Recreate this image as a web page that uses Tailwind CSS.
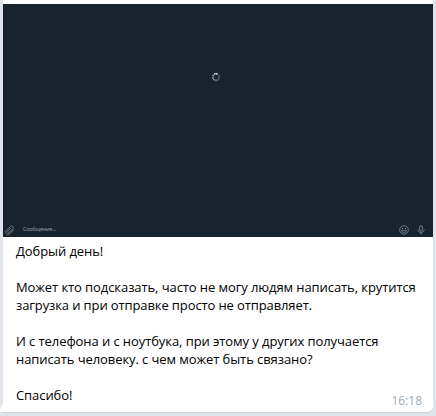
<!DOCTYPE html>
<html lang="ru">
<head>
<meta charset="utf-8">
<title>Сообщение</title>
<script src="https://cdn.jsdelivr.net/npm/@tailwindcss/browser@4"></script>
</head>
<body class="w-[436px] h-[416px] overflow-hidden bg-[#dfe5ea] font-['Open_Sans','Noto_Sans',sans-serif]">
<main class="relative ml-[3px] w-[430px] h-[412px] flex flex-col bg-white rounded-br-[6px] shadow-[0_1px_1px_#c8d1d9]">
  <svg class="absolute -left-[3px] bottom-0 w-[3px] h-3" viewBox="0 0 3 12" fill="#fff"><path d="M3 0C3 4 2 7 0 9V12H3Z"/></svg>
  <section class="mt-1 h-[233px] shrink-0 flex flex-col bg-[#18242d]">
    <div class="flex-1 pt-[68px] pl-[208px]">
      <svg class="size-[10px]" viewBox="0 0 10 10" fill="none" stroke-width="1.5">
        <path d="M4.2 2.8L3.7 1M5.7 2.8L6.1 1" stroke="#c5cdd2"/>
        <path d="M7.2 4.3L9 3.6M7.3 5.7L9 6.3M6.6 7.1L7.8 8.5" stroke="#56636d"/>
        <path d="M5 7.4V9.3M3.4 6.9L2.3 8.3M2.8 5.5L1 6M3 4L1.4 3" stroke="#8a979f"/>
      </svg>
    </div>
    <div class="h-[14px] flex items-center text-[#7b8790]">
      <svg class="ml-[2px] size-[10px]" viewBox="0 0 10 10" fill="none" stroke="currentColor" stroke-width=".85" stroke-linecap="round"><path d="M8.7 4.6L5 8.4C3.8 9.6 2.3 9.6 1.4 8.6C.5 7.6.6 6.3 1.6 5.3L5.3 1.5C6.1.7 7.1.7 7.9 1.4C8.6 2.2 8.5 3.1 7.8 3.9L4.4 7.3C3.9 7.8 3.3 7.8 2.9 7.4C2.5 7 2.6 6.4 3 6L6 3"/></svg>
      <span class="ml-2 text-[5.5px] leading-none tracking-[-0.25px] text-[#98a3aa]">Сообщение...</span>
      <svg class="ml-auto size-[10px]" viewBox="0 0 10 10" fill="none" stroke="currentColor" stroke-width=".8"><circle cx="5" cy="5" r="4.3"/><path d="M2.6 5.7H7.4C7.1 7.1 6.2 7.8 5 7.8S2.9 7.1 2.6 5.7Z"/><path d="M3.5 3V4.3M6.5 3V4.3" stroke-width="1"/></svg>
      <svg class="ml-[7px] mr-[7px] size-[10px]" viewBox="0 0 10 10" fill="none" stroke="currentColor" stroke-width=".85"><rect x="3.6" y=".6" width="2.8" height="5.5" rx="1.4"/><path d="M1.9 4.4C1.9 6.3 3.2 7.5 5 7.5S8.1 6.3 8.1 4.4M5 7.5V9.6"/></svg>
    </div>
  </section>
  <section class="pl-[13px] pt-[5px] text-[13px] leading-[18px] tracking-[-0.08px] text-black whitespace-nowrap">
    <p>Добрый день!</p>
    <p class="mt-[18px]">Может кто подсказать, часто не могу людям написать, крутится<br><span class="tracking-[-0.11px]">загрузка и при отправке просто не отправляет.</span></p>
    <p class="mt-[18px]">И с телефона и с ноутбука, при этому у других получается<br>написать человеку. с чем может быть связано?</p>
    <p class="mt-[18px]">Спасибо!</p>
  </section>
  <time class="absolute right-[11px] bottom-[2px] text-[12px] leading-[18px] text-[#a0acb6]">16:18</time>
</main>
</body>
</html>
